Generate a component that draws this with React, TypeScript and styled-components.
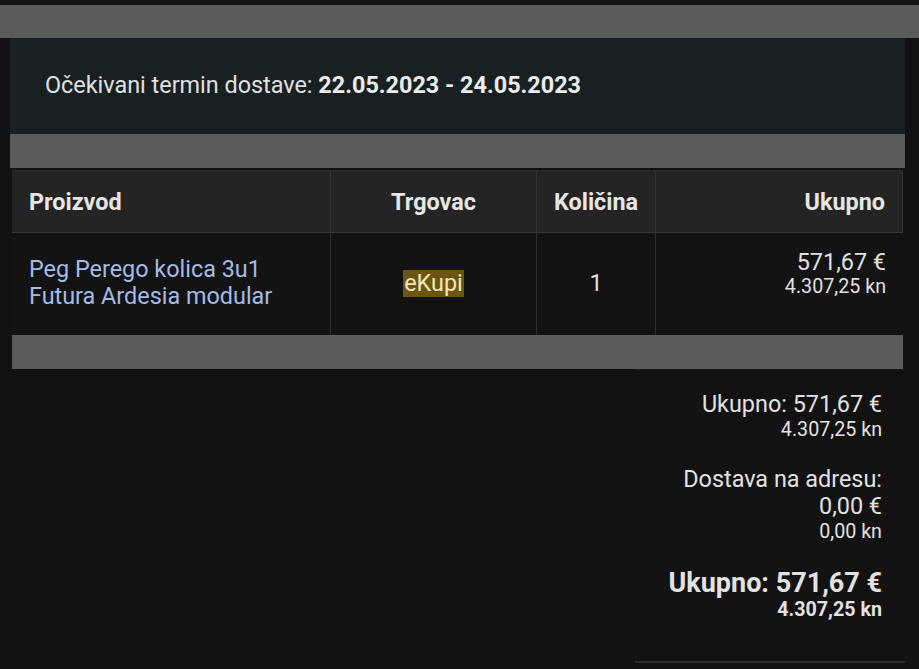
import React from "react";
import styled, { createGlobalStyle } from "styled-components";

const Global = createGlobalStyle`
  html, body { margin: 0; padding: 0; background: #121212; }
  body { font-family: Roboto, "Noto Sans", Arial, sans-serif; color: #e2e2e2; }
  * { box-sizing: border-box; }
`;

const Page = styled.div`
  padding-top: 5px;
  min-height: 669px;
  background: #121212;
`;

const TopBand = styled.div`
  height: 33px;
  background: #5a5a5a;
`;

const Content = styled.div`
  padding: 0 14px 0 10px;
  display: flex;
  flex-direction: column;
`;

const DeliveryBox = styled.div`
  height: 96px;
  background: #182022;
  display: flex;
  align-items: center;
  padding: 0 35px 2px;
  font-size: 23.4px;
  color: #e0e0e0;
  b { font-weight: 700; color: #ececec; }
`;

const GrayBand = styled.div`
  height: 34px;
  background: #5a5a5a;
`;

const Table = styled.div`
  margin: 2px 2px 0;
  display: grid;
  grid-template-columns: 319px 206px 119px 1fr;
  background: #131313;
  border-top: 1px solid #2a2a2a;
`;

const HeadCell = styled.div<{ $align: string }>`
  height: 62px;
  background: #242424;
  display: flex;
  align-items: center;
  justify-content: ${(p) => p.$align};
  padding: 0 17px;
  font-size: 23.4px;
  font-weight: 700;
  color: #e6e6e6;
  border-right: 1px solid #343434;
  border-bottom: 1px solid #343434;
  &:last-child { border-right: none; }
`;

const BodyCell = styled.div<{ $align: string }>`
  height: 102px;
  display: flex;
  flex-direction: column;
  justify-content: center;
  align-items: ${(p) => p.$align};
  padding: 0 17px 2px;
  font-size: 23.4px;
  color: #e0e0e0;
  border-right: 1px solid #2e2e2e;
  &:last-child { border-right: none; }
`;

const ProductLink = styled.a`
  color: #a3bbe6;
  text-decoration: none;
  line-height: 27px;
  font-size: 23.4px;
`;

const Merchant = styled.span`
  background: #6b5514;
  color: #f3e6b6;
  padding: 0 1px;
  line-height: 27px;
`;

const Price = styled.div`
  display: flex;
  flex-direction: column;
  align-items: flex-end;
  margin-bottom: 19px;
`;

const PriceMain = styled.div`
  font-size: 23.4px;
  line-height: 25px;
`;

const PriceSub = styled.div`
  font-size: 19.7px;
  line-height: 23px;
`;

const BottomBand = styled(GrayBand)`
  margin: 0 2px;
`;

const SummaryWrap = styled.div`
  display: flex;
  justify-content: flex-end;
`;

const Summary = styled.div`
  width: 270px;
  border-top: 1px solid #1f1f1f;
  border-bottom: 2px solid #2c2c2c;
  padding: 21px 23px 40px 0;
  display: flex;
  flex-direction: column;
  align-items: flex-end;
  gap: 25px;
  color: #e2e2e2;
`;

const SumGroup = styled.div`
  display: flex;
  flex-direction: column;
  align-items: flex-end;
`;

const SumLine = styled.div<{ $size: number; $lh: number; $bold?: boolean }>`
  font-size: ${(p) => p.$size}px;
  font-weight: ${(p) => (p.$bold ? 700 : 400)};
  line-height: ${(p) => p.$lh}px;
`;

export default function App() {
  return (
    <Page>
      <Global />
      <TopBand />
      <Content>
        <DeliveryBox>
          <span>
            Očekivani termin dostave: <b>22.05.2023 - 24.05.2023</b>
          </span>
        </DeliveryBox>
        <GrayBand />
        <Table>
          <HeadCell $align="flex-start">Proizvod</HeadCell>
          <HeadCell $align="center">Trgovac</HeadCell>
          <HeadCell $align="center">Količina</HeadCell>
          <HeadCell $align="flex-end">Ukupno</HeadCell>
          <BodyCell $align="flex-start">
            <ProductLink href="#">
              Peg Perego kolica 3u1
              <br />
              Futura Ardesia modular
            </ProductLink>
          </BodyCell>
          <BodyCell $align="center">
            <Merchant>eKupi</Merchant>
          </BodyCell>
          <BodyCell $align="center">1</BodyCell>
          <BodyCell $align="flex-end">
            <Price>
              <PriceMain>571,67 €</PriceMain>
              <PriceSub>4.307,25 kn</PriceSub>
            </Price>
          </BodyCell>
        </Table>
        <BottomBand />
        <SummaryWrap>
          <Summary>
            <SumGroup>
              <SumLine $size={23.4} $lh={27}>Ukupno: 571,67 €</SumLine>
              <SumLine $size={19.7} $lh={23}>4.307,25 kn</SumLine>
            </SumGroup>
            <SumGroup>
              <SumLine $size={23.4} $lh={27}>Dostava na adresu:</SumLine>
              <SumLine $size={23.4} $lh={27}>0,00 €</SumLine>
              <SumLine $size={19.7} $lh={23}>0,00 kn</SumLine>
            </SumGroup>
            <SumGroup>
              <SumLine $size={27} $lh={30} $bold>Ukupno: 571,67 €</SumLine>
              <SumLine $size={19.7} $lh={23} $bold>4.307,25 kn</SumLine>
            </SumGroup>
          </Summary>
        </SummaryWrap>
      </Content>
    </Page>
  );
}
